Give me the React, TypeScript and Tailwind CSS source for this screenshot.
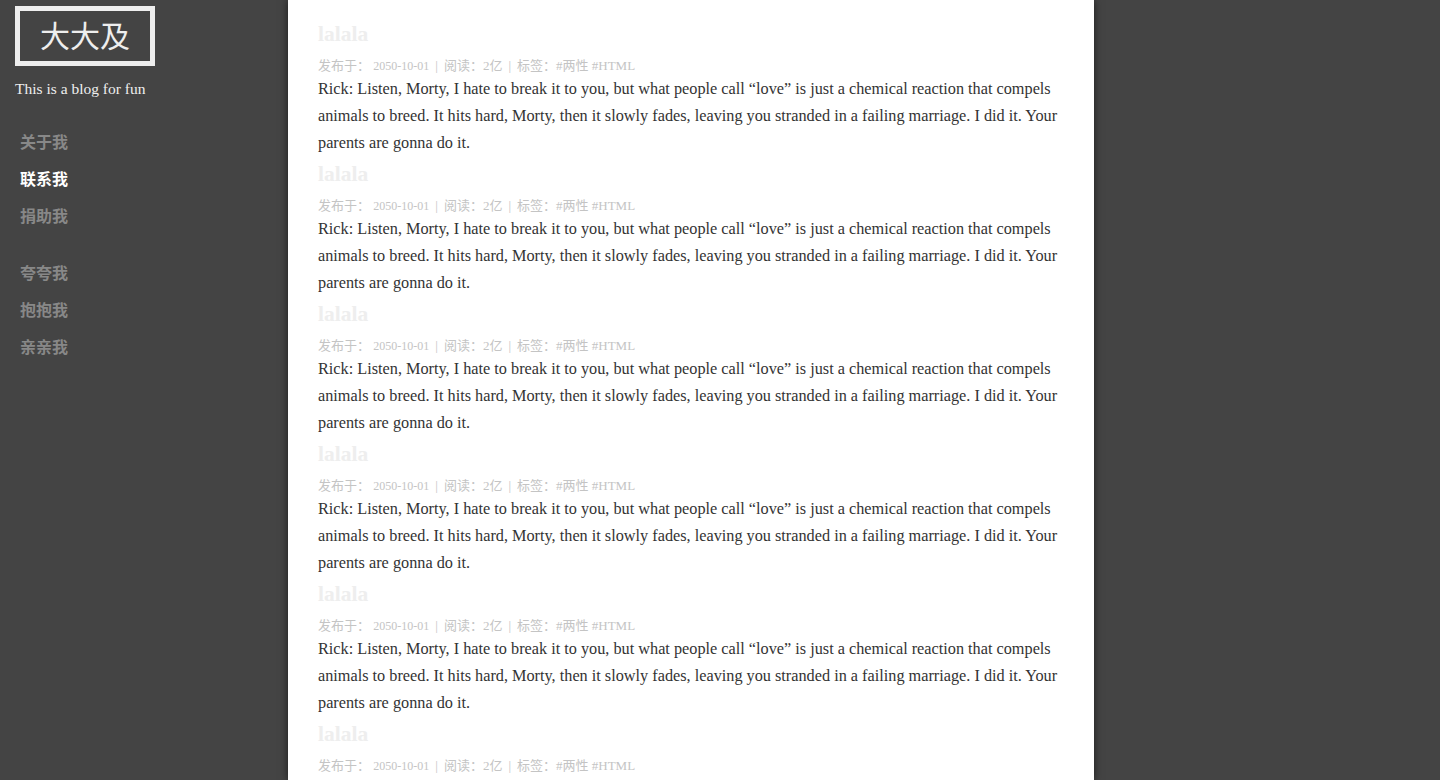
import React from "react";

const serif = { fontFamily: '"Liberation Serif", "Noto Sans CJK SC", serif' };

function Sep() {
  return <span className="mx-[6px]">|</span>;
}

function Post() {
  return (
    <div>
      <h2 className="h-[35px] text-[21.5px] leading-[35px] font-bold text-[#eeeeee]">lalala</h2>
      <div className="mt-[3px] h-[21px] overflow-hidden text-[13px] leading-[21px] text-[#c4c4c4]">
        发布于： <span className="text-[12px] leading-[21px]">2050-10-01</span>
        <Sep />阅读：2亿<Sep />标签：#两性 #HTML
      </div>
      <p className="text-[16.25px] leading-[27px] text-[#333333]">
        Rick: Listen, Morty, I hate to break it to you, but what people call “love” is just a chemical reaction that compels animals to breed. It hits hard, Morty, then it slowly fades, leaving you stranded in a failing marriage. I did it. Your parents are gonna do it.
      </p>
    </div>
  );
}

export default function App() {
  const nav1 = [
    { t: "关于我", a: false },
    { t: "联系我", a: true },
    { t: "捐助我", a: false },
  ];
  const nav2 = ["夸夸我", "抱抱我", "亲亲我"];
  return (
    <div className="flex h-[780px] overflow-hidden bg-[#444444]" style={serif}>
      <aside className="w-[288px] shrink-0 pl-[15px] pt-[6px]">
        <div className="flex h-[60px] w-[140px] items-center justify-center border-[5px] border-[#eeeeee] text-[30px] text-[#eeeeee]">
          大大及
        </div>
        <p className="mt-[12px] text-[15.5px] leading-[22px] text-[#eeeeee]">This is a blog for fun</p>
        <nav className="mt-[23px] pl-[5px] text-[16px] font-bold" style={{ fontFamily: '"Noto Sans CJK SC", sans-serif' }}>
          {nav1.map((n) => (
            <div key={n.t} className={`leading-[37px] ${n.a ? "text-white" : "text-[#888888]"}`}>{n.t}</div>
          ))}
          <div className="mt-[20px]">
            {nav2.map((t) => (
              <div key={t} className="leading-[37px] text-[#888888]">{t}</div>
            ))}
          </div>
        </nav>
      </aside>
      <main className="w-[806px] shrink-0 bg-white px-[30px] pt-[17px] shadow-[0_0_8px_rgba(0,0,0,0.6)]">
        {[0, 1, 2, 3, 4, 5].map((i) => (
          <Post key={i} />
        ))}
      </main>
    </div>
  );
}
